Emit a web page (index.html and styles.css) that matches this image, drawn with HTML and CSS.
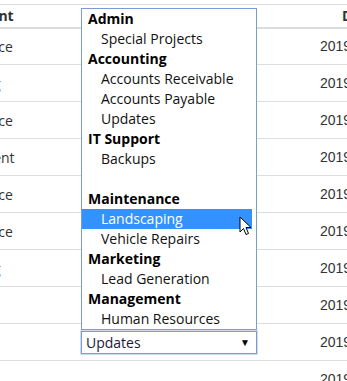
FILE: index.html
```html
<!DOCTYPE html>
<html lang="en">
<head>
    <meta charset="UTF-8">
    <title>Tasks</title>
    <link rel="stylesheet" href="styles.css">
</head>
<body>
    <div class="table-wrap">
        <table class="task-table">
            <thead>
                <tr>
                    <th class="col-dept">Department</th>
                    <th class="col-cat"></th>
                    <th class="col-date">Date</th>
                </tr>
            </thead>
            <tbody>
                <tr><td class="col-dept">Maintenance</td><td></td><td class="col-date">2019-03-14</td></tr>
                <tr><td class="col-dept">Accounting</td><td></td><td class="col-date">2019-03-12</td></tr>
                <tr><td class="col-dept">Maintenance</td><td></td><td class="col-date">2019-03-11</td></tr>
                <tr><td class="col-dept">Management</td><td></td><td class="col-date">2019-03-08</td></tr>
                <tr><td class="col-dept">Maintenance</td><td></td><td class="col-date">2019-03-07</td></tr>
                <tr><td class="col-dept">Maintenance</td><td></td><td class="col-date">2019-03-05</td></tr>
                <tr><td class="col-dept">Accounting</td><td></td><td class="col-date">2019-03-04</td></tr>
                <tr><td class="col-dept"></td><td></td><td class="col-date">2019-03-01</td></tr>
                <tr>
                    <td class="col-dept"></td>
                    <td class="col-cat">
                        <div class="picker">
                            <div class="picker-box">
                                <span>Updates</span>
                                <span class="picker-arrow">&#9660;</span>
                            </div>

                            <!-- open dropdown list, drawn above the box -->
                            <div class="picker-list">
                                <div class="group">Admin</div>
                                <div class="option">Special Projects</div>
                                <div class="group">Accounting</div>
                                <div class="option">Accounts Receivable</div>
                                <div class="option">Accounts Payable</div>
                                <div class="option">Updates</div>
                                <div class="group">IT Support</div>
                                <div class="option">Backups</div>
                                <div class="group"></div>
                                <div class="group">Maintenance</div>
                                <div class="option hover">
                                    Landscaping
                                    <svg class="cursor" width="13" height="20" viewBox="0 0 13 20">
                                        <path d="M1 1 L1 16 L4.5 12.5 L7 18.5 L9.5 17.5 L7 11.5 L12 11.5 Z" fill="#fff" stroke="#000" stroke-width="1"/>
                                    </svg>
                                </div>
                                <div class="option">Vehicle Repairs</div>
                                <div class="group">Marketing</div>
                                <div class="option">Lead Generation</div>
                                <div class="group">Management</div>
                                <div class="option">Human Resources</div>
                            </div>
                        </div>
                    </td>
                    <td class="col-date">2019-02-28</td>
                </tr>
                <tr><td class="col-dept"></td><td></td><td class="col-date">2019-02-27</td></tr>
            </tbody>
        </table>
    </div>
</body>
</html>
```

FILE: styles.css
```css
body {
    margin: 0;
    font-family: 'Open Sans', sans-serif;
    font-size: 14px;
    color: #333;
    background-color: #fff;
    overflow: hidden;
}

.table-wrap {
    margin-left: -80px;
    padding-top: 4px;
    width: 600px;
}

.task-table {
    border-collapse: collapse;
    table-layout: fixed;
    width: 545px;
}

.task-table th,
.task-table td {
    box-sizing: border-box;
    padding: 0 8px;
    white-space: nowrap;
}

.task-table th {
    height: 23px;
    text-align: left;
    font-weight: bold;
    border-top: 1px solid #ddd;
    border-bottom: 2px solid #ddd;
    line-height: 21px;
}

.task-table td {
    height: 37px;
    border-bottom: 1px solid #ddd;
    vertical-align: middle;
}

.task-table th.col-dept {
    width: 153px;
}

.task-table th.col-cat {
    width: 192px;
}

.task-table th.col-date {
    width: 200px;
    padding-left: 77px;
}

.task-table td.col-date {
    font-family: 'Liberation Sans', Arial, sans-serif;
    padding-left: 55px;
}

.picker {
    position: relative;
}

.picker-box {
    display: flex;
    align-items: center;
    justify-content: space-between;
    height: 21px;
    padding: 0 6px 0 4px;
    border: 1px solid #7a9bd6;
    box-shadow: 0 0 0 1px rgba(122, 155, 214, 0.35);
    color: #1a1a3a;
    font-size: 14px;
}

.picker-arrow {
    font-size: 10px;
    color: #000;
}

.picker-list {
    position: absolute;
    left: 0;
    right: 0;
    bottom: 24px;
    background-color: #fff;
    border: 1px solid #7a9bd6;
    padding-right: 4px;
    color: #111;
}

.group,
.option {
    height: 20px;
    line-height: 20px;
    white-space: nowrap;
}

.group {
    font-weight: bold;
    color: #000;
    padding-left: 6px;
}

.option {
    padding-left: 19px;
    position: relative;
}

.option.hover {
    background-color: #3392ff;
    color: #fff;
}

.cursor {
    position: absolute;
    left: 157px;
    top: 7px;
}
```
